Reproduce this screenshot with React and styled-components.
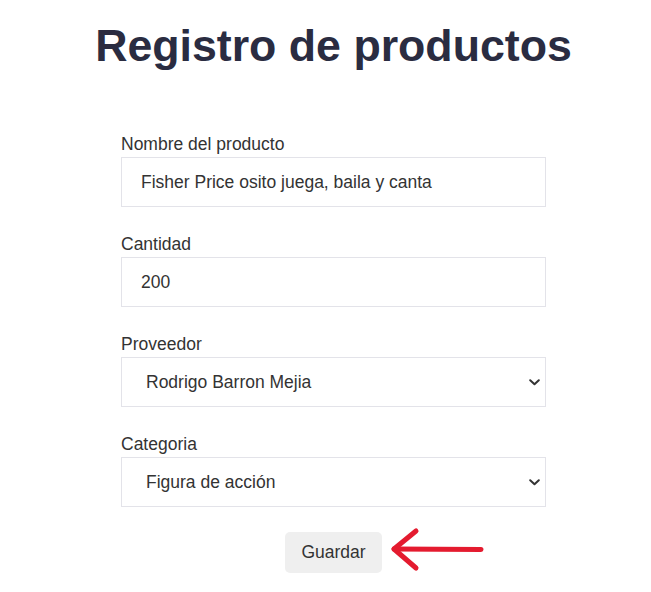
import React from "react";
import styled, { createGlobalStyle } from "styled-components";

const GlobalStyle = createGlobalStyle`
  html, body {
    margin: 0;
    padding: 0;
    background: #ffffff;
  }
  body {
    font-family: "Liberation Sans", Arial, sans-serif;
    color: #333333;
  }
`;

const Page = styled.main`
  display: flex;
  flex-direction: column;
  align-items: center;
  padding: 20px 0 0 16px;
`;

const Title = styled.h1`
  margin: 0;
  font-size: 44.7px;
  font-weight: 700;
  color: #2a2c41;
  line-height: 51px;
`;

const Form = styled.form`
  width: 425px;
  margin-top: 63px;
  display: flex;
  flex-direction: column;
`;

const Field = styled.div`
  display: flex;
  flex-direction: column;
  margin-bottom: ${(p) => (p.$last ? "25px" : "27px")};
`;

const Label = styled.label`
  font-size: 17.5px;
  line-height: 20px;
  color: #333333;
  margin-bottom: 3px;
`;

const controlStyles = `
  box-sizing: border-box;
  width: 100%;
  height: 50px;
  border: 1px solid #e3e3e9;
  border-radius: 0;
  background: #ffffff;
  font-family: "Liberation Sans", Arial, sans-serif;
  font-size: 17.5px;
  color: #333333;
  outline: none;
  margin: 0;
`;

const Input = styled.input`
  ${controlStyles}
  padding: 0 19px;
`;

const SelectWrap = styled.div`
  position: relative;
  display: flex;
`;

const Select = styled.select`
  ${controlStyles}
  appearance: none;
  -webkit-appearance: none;
  padding: 0 30px 0 24px;
`;

const Chevron = styled.svg`
  position: absolute;
  right: 6px;
  top: 50%;
  width: 11px;
  height: 7px;
  margin-top: -3px;
  pointer-events: none;
`;

const ButtonRow = styled.div`
  display: flex;
  justify-content: center;
`;

const ButtonWrap = styled.div`
  position: relative;
`;

const Button = styled.button`
  box-sizing: border-box;
  width: 97px;
  height: 41px;
  border: none;
  border-radius: 5px;
  background: #efefef;
  font-family: "Liberation Sans", Arial, sans-serif;
  font-size: 17.5px;
  color: #333333;
  cursor: pointer;
`;

const Arrow = styled.svg`
  position: absolute;
  left: calc(100% + 8px);
  top: -6px;
  width: 96px;
  height: 46px;
  overflow: visible;
`;

function SelectField({ id, value, label }) {
  return (
    <SelectWrap>
      <Select id={id} defaultValue={value}>
        <option value={value}>{label}</option>
      </Select>
      <Chevron viewBox="0 0 11 7" aria-hidden="true">
        <path
          d="M1.2 1.2 L5.5 5.3 L9.8 1.2"
          fill="none"
          stroke="#333333"
          strokeWidth="2"
          strokeLinecap="round"
          strokeLinejoin="round"
        />
      </Chevron>
    </SelectWrap>
  );
}

export default function App() {
  return (
    <>
      <GlobalStyle />
      <Page>
        <Title>Registro de productos</Title>
        <Form onSubmit={(e) => e.preventDefault()}>
          <Field>
            <Label htmlFor="nombre">Nombre del producto</Label>
            <Input
              id="nombre"
              type="text"
              defaultValue="Fisher Price osito juega, baila y canta"
            />
          </Field>
          <Field>
            <Label htmlFor="cantidad">Cantidad</Label>
            <Input id="cantidad" type="text" defaultValue="200" />
          </Field>
          <Field>
            <Label htmlFor="proveedor">Proveedor</Label>
            <SelectField
              id="proveedor"
              value="rodrigo"
              label="Rodrigo Barron Mejia"
            />
          </Field>
          <Field $last>
            <Label htmlFor="categoria">Categoria</Label>
            <SelectField
              id="categoria"
              value="figura"
              label="Figura de acción"
            />
          </Field>
          <ButtonRow>
            <ButtonWrap>
              <Button type="submit">Guardar</Button>
              <Arrow viewBox="0 0 96 46" aria-hidden="true">
                <g
                  fill="none"
                  stroke="#e41b2f"
                  strokeWidth="5"
                  strokeLinecap="round"
                  strokeLinejoin="round"
                >
                  <path d="M4 23 L91 23.5" />
                  <path d="M26 5 L4 23 L26 42" />
                </g>
              </Arrow>
            </ButtonWrap>
          </ButtonRow>
        </Form>
      </Page>
    </>
  );
}
